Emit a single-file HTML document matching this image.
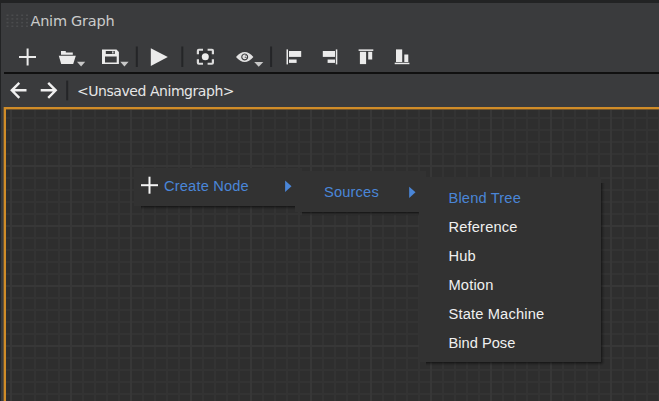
<!DOCTYPE html>
<html><head><meta charset="utf-8">
<style>
html,body{margin:0;padding:0;}
body{width:659px;height:401px;overflow:hidden;background:#222324;position:relative;font-family:"DejaVu Sans","Liberation Sans",sans-serif;color:#e0e0e0;}
.abs{position:absolute;}
#panel{left:1px;top:3px;width:658px;height:398px;background:#3a3b3d;}
#title{left:30.500px;top:13px;font-size:14.500px;letter-spacing:-0.250px;line-height:17px;color:#cbcbcb;white-space:pre;}
#grip{left:4px;top:12px;}
#tbline{left:4px;top:72px;width:655px;height:2px;background:#101010;}
#crumb{left:77px;top:83px;font-size:14px;letter-spacing:-0.450px;line-height:16px;color:#e6e6e6;white-space:pre;}
#canvas{left:4px;top:107px;width:655px;height:294px;background-color:#2e2e2e;}
#grid{left:6px;top:109px;width:653px;height:292px;
 background-image:linear-gradient(to right,#373737 2px,transparent 2px),linear-gradient(to bottom,#373737 2px,transparent 2px),linear-gradient(to right,#333333 2px,transparent 2px),linear-gradient(to bottom,#333333 2px,transparent 2px);
 background-size:60px 60px,60px 60px,12px 12px,12px 12px;background-position:4px 56px,4px 56px,4px 8px,4px 8px;}
#bl{left:4px;top:107px;width:2px;height:294px;background:#d08c28;}
#bl2{left:3px;top:107px;width:1px;height:294px;background:#6a5434;}
#bt{left:4px;top:107px;width:655px;height:2px;background:#d08c28;}
#bt2{left:6px;top:109px;width:653px;height:1px;background:#6e532b;}
.menu{background:#323232;}
.shb{background:linear-gradient(to bottom,rgba(0,0,0,0.55),rgba(0,0,0,0.18) 50%,rgba(0,0,0,0));}
.shr{background:linear-gradient(to right,rgba(0,0,0,0.5),rgba(0,0,0,0.16) 50%,rgba(0,0,0,0));}
.shc{background:radial-gradient(circle at 0 0,rgba(0,0,0,0.5),rgba(0,0,0,0.16) 2px,rgba(0,0,0,0) 4px);}
.mi{position:absolute;font-family:"Liberation Sans","DejaVu Sans",sans-serif;font-size:14.670px;letter-spacing:0.160px;line-height:17px;white-space:pre;color:#f0f0f0;}
.blue{color:#4a86d8;}
</style></head><body>
<div id="panel" class="abs"></div>
<svg id="grip" class="abs" width="28" height="18" viewBox="4 12 28 18"><g fill="#4b4c4e">
<rect x="6.500" y="14.500" width="2" height="1.500"/><rect x="11.400" y="14.500" width="2" height="1.500"/><rect x="16.200" y="14.500" width="2" height="1.500"/><rect x="21.100" y="14.500" width="2" height="1.500"/><rect x="26" y="14.500" width="2" height="1.500"/>
<rect x="6.500" y="18.200" width="2" height="1.500"/><rect x="11.400" y="18.200" width="2" height="1.500"/><rect x="16.200" y="18.200" width="2" height="1.500"/><rect x="21.100" y="18.200" width="2" height="1.500"/><rect x="26" y="18.200" width="2" height="1.500"/>
<rect x="6.500" y="21.900" width="2" height="1.500"/><rect x="11.400" y="21.900" width="2" height="1.500"/><rect x="16.200" y="21.900" width="2" height="1.500"/><rect x="21.100" y="21.900" width="2" height="1.500"/><rect x="26" y="21.900" width="2" height="1.500"/>
<rect x="6.500" y="25.500" width="2" height="1.500"/><rect x="11.400" y="25.500" width="2" height="1.500"/><rect x="16.200" y="25.500" width="2" height="1.500"/><rect x="21.100" y="25.500" width="2" height="1.500"/><rect x="26" y="25.500" width="2" height="1.500"/>
</g></svg>
<div id="title" class="abs">Anim Graph</div>

<!-- toolbar icons -->
<svg class="abs" style="left:0;top:40px" width="430" height="32" viewBox="0 40 430 32">
 <g fill="#ebebeb" stroke="none">
  <!-- plus -->
  <rect x="19" y="56" width="17" height="2"/><rect x="26.600" y="48.500" width="2" height="17"/>
  <!-- folder -->
  <path d="M61 51h4.800v1.500h7v2.200h-11.800z M58.800 55.800h17l-2.600 8.200h-12z"/>
  <path d="M77 61.800h8.200l-4.100 4.600z" fill="#c8c8c8"/>
  <!-- save -->
  <path d="M102 49.500h14.500l2.400 2.400v12.100h-16.900z M105.800 51v3h9v-3z M105 56.600v6h11.700v-6z" fill-rule="evenodd"/>
  <rect x="112.200" y="51.300" width="1.300" height="2.200"/>
  <path d="M120.300 61.800h8.300l-4.150 4.700z" fill="#c8c8c8"/>
  <!-- play -->
  <path d="M150.800 48.200l17 8.850l-17 8.850z"/>
  <!-- focus -->
  <rect x="199" y="51" width="12.500" height="11.500" fill="#313234"/>
  <circle cx="205.300" cy="56.800" r="3.500" fill="#ececec"/>
  <path fill="#dcdcdc" d="M196.800 54.300v-3.600a2 2 0 0 1 2-2h4.200v2.100h-4v3.500z M214 54.300v-3.600a2 2 0 0 0-2-2h-4.400v2.100h4.200v3.500z M196.800 59.300v3.500a2 2 0 0 0 2 2h4.200v-2.100h-4v-3.400z M214 59.300v3.500a2 2 0 0 1-2 2h-4.400v-2.100h4.200v-3.400z"/>
  <!-- eye -->
  <path d="M236 56.900q8.700-10 17.400 0q-8.700 10-17.400 0z M244.700 53.400a3.500 3.500 0 1 0 0.010 0z M244.700 54.500a2.400 2.400 0 1 1-0.010 0z" fill-rule="evenodd" fill="#e2e2e2"/>
  <path d="M244.700 56.900l2.200-1.700l-0.700-0.900z M244.700 56.900h2v0.800h-2z" fill="#55565a"/>
  <path d="M254.200 61.900h9.100l-4.550 4.800z" fill="#c8c8c8"/>
  <!-- align left -->
  <rect x="286.500" y="49.400" width="1.500" height="15"/><rect x="289" y="51" width="12.200" height="5.900"/><rect x="289" y="59.500" width="7.600" height="3.400"/>
  <!-- align right -->
  <rect x="335.800" y="49.400" width="1.500" height="15"/><rect x="322.800" y="51" width="12.200" height="5.900"/><rect x="327.600" y="59.500" width="7.400" height="3.400"/>
  <!-- align top -->
  <rect x="358.600" y="49.400" width="14.700" height="1.500"/><rect x="359.900" y="51.800" width="6.200" height="12.300"/><rect x="368.200" y="51.800" width="4" height="7.700"/>
  <!-- align bottom -->
  <rect x="394.700" y="62.700" width="14.700" height="1.500"/><rect x="396" y="49.400" width="6.200" height="12.600"/><rect x="404.300" y="54.500" width="4" height="7.500"/>
 </g>
 <g fill="#242527">
  <rect x="135.800" y="46.500" width="2" height="20.500"/>
  <rect x="181.300" y="46.500" width="2" height="20.500"/>
  <rect x="270.100" y="46.500" width="2" height="20.500"/>
 </g>
</svg>
<div id="tbline" class="abs"></div>

<!-- nav arrows -->
<svg class="abs" style="left:0;top:76px" width="80" height="28" viewBox="0 76 80 28">
 <g fill="none" stroke="#f0f0f0" stroke-width="2.400" stroke-linecap="butt" stroke-linejoin="miter">
  <path d="M26.500 90.300h-14 M19.300 82.800l-7.500 7.500l7.500 7.500"/>
  <path d="M40.700 90.300h14 M48.200 82.800l7.500 7.500l-7.500 7.500"/>
 </g>
 <rect x="66.200" y="80.600" width="2" height="19.700" fill="#242527"/>
</svg>
<div id="crumb" class="abs">&lt;Unsaved Animgraph&gt;</div>

<div id="canvas" class="abs"></div>
<div id="grid" class="abs"></div>
<div id="bl2" class="abs"></div>
<div id="bt2" class="abs"></div>
<div id="bl" class="abs"></div>
<div id="bt" class="abs"></div>

<!-- menus -->
<div class="abs menu" style="left:134px;top:168px;width:168px;height:37.5px;"></div>
<div class="abs shb" style="left:141px;top:205.5px;width:161px;height:4px;"></div>
<div class="abs shr" style="left:302px;top:174px;width:4px;height:31.5px;"></div>
<div class="abs shc" style="left:302px;top:205.5px;width:4px;height:4px;"></div>
<div class="abs menu" style="left:295px;top:171px;width:131px;height:41px;"></div>
<div class="abs shb" style="left:302px;top:212px;width:124px;height:4px;"></div>
<div class="abs shr" style="left:426px;top:177px;width:4px;height:35px;"></div>
<div class="abs shc" style="left:426px;top:212px;width:4px;height:4px;"></div>
<div class="abs menu" style="left:419px;top:177px;width:182px;height:184.5px;"></div>
<div class="abs shb" style="left:426px;top:361.5px;width:175px;height:4px;"></div>
<div class="abs shr" style="left:601px;top:183px;width:4px;height:178.5px;"></div>
<div class="abs shc" style="left:601px;top:361.5px;width:4px;height:4px;"></div>

<svg class="abs" style="left:140px;top:176px" width="20" height="20" viewBox="140 176 20 20"><g fill="#f4f4f4"><rect x="141" y="184.200" width="17" height="2"/><rect x="148.500" y="176.700" width="2" height="17"/></g></svg>
<div class="mi blue" style="left:164px;top:178px;">Create Node</div>
<svg class="abs" style="left:284px;top:179px" width="10" height="14" viewBox="284 179 10 14"><path d="M285.100 180.500l6.400 5.700l-6.400 5.700z" fill="#4a86d8"/></svg>
<div class="mi blue" style="left:324px;top:184px;">Sources</div>
<svg class="abs" style="left:408px;top:185px" width="10" height="14" viewBox="408 185 10 14"><path d="M409.200 186.700l6.300 5.600l-6.300 5.600z" fill="#4a86d8"/></svg>

<div class="mi blue" style="left:448.500px;top:190px;">Blend Tree</div>
<div class="mi" style="left:448.500px;top:219px;">Reference</div>
<div class="mi" style="left:448.500px;top:248px;">Hub</div>
<div class="mi" style="left:448.500px;top:277px;">Motion</div>
<div class="mi" style="left:448.500px;top:306px;">State Machine</div>
<div class="mi" style="left:448.500px;top:335px;letter-spacing:0;">Bind Pose</div>
</body></html>
